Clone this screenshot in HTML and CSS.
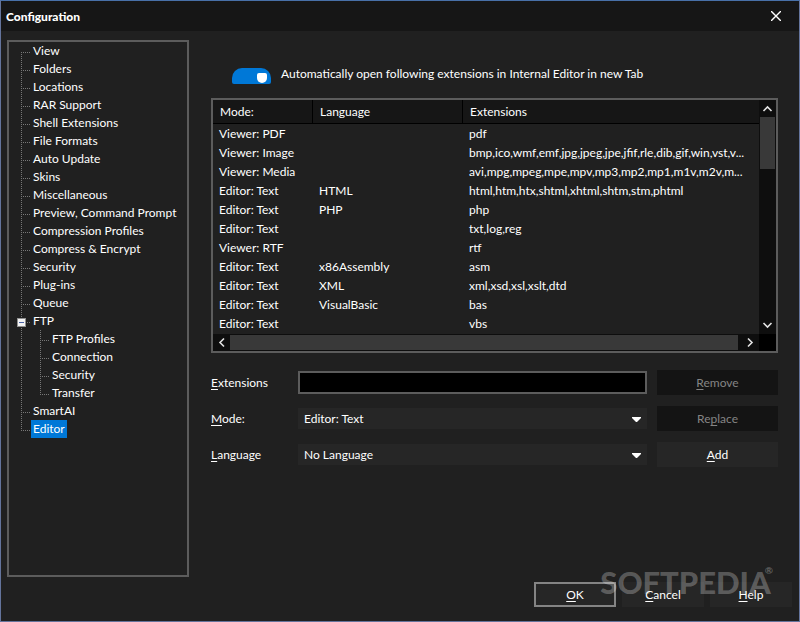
FILE: index.html
```
<!DOCTYPE html>
<html lang="en">
<head>
	<meta charset="UTF-8">
	<title>Configuration</title>
	<link rel="stylesheet" href="styles.css">
</head>
<body>
	<div class="window">
		<header class="titlebar">
			<h1>Configuration</h1>
			<button class="close" type="button" aria-label="Close">
				<svg width="10" height="10" viewBox="0 0 10 10"><path d="M0 0L10 10M10 0L0 10"/></svg>
			</button>
		</header>
		<div class="main">
			<nav class="tree">
				<ul>
					<li><a href="#view">View</a></li>
					<li><a href="#folders">Folders</a></li>
					<li><a href="#locations">Locations</a></li>
					<li><a href="#rar">RAR Support</a></li>
					<li><a href="#shell">Shell Extensions</a></li>
					<li><a href="#formats">File Formats</a></li>
					<li><a href="#update">Auto Update</a></li>
					<li><a href="#skins">Skins</a></li>
					<li><a href="#misc">Miscellaneous</a></li>
					<li><a href="#preview">Preview, Command Prompt</a></li>
					<li><a href="#profiles">Compression Profiles</a></li>
					<li><a href="#compress">Compress &amp; Encrypt</a></li>
					<li><a href="#security">Security</a></li>
					<li><a href="#plugins">Plug-ins</a></li>
					<li><a href="#queue">Queue</a></li>
					<li class="parent">
						<button class="toggle" type="button" aria-label="Collapse FTP" aria-expanded="true"></button>
						<a href="#ftp">FTP</a>
						<ul>
							<li><a href="#ftp-profiles">FTP Profiles</a></li>
							<li><a href="#ftp-connection">Connection</a></li>
							<li><a href="#ftp-security">Security</a></li>
							<li><a href="#ftp-transfer">Transfer</a></li>
						</ul>
					</li>
					<li><a href="#smartai">SmartAI</a></li>
					<li><a class="selected" href="#editor">Editor</a></li>
				</ul>
			</nav>
			<main class="pane" id="editor">
				<label class="auto-open">
					<input type="checkbox" class="switch" checked>
					<span>Automatically open following extensions in Internal Editor in new Tab</span>
				</label>

				<div class="list">
					<table>
						<colgroup>
							<col class="col-mode">
							<col class="col-lang">
							<col>
						</colgroup>
						<thead>
							<tr><th>Mode:</th><th>Language</th><th>Extensions</th></tr>
						</thead>
						<tbody>
							<tr><td>Viewer: PDF</td><td></td><td>pdf</td></tr>
							<tr><td>Viewer: Image</td><td></td><td>bmp,ico,wmf,emf,jpg,jpeg,jpe,jfif,rle,dib,gif,win,vst,v...</td></tr>
							<tr><td>Viewer: Media</td><td></td><td>avi,mpg,mpeg,mpe,mpv,mp3,mp2,mp1,m1v,m2v,m...</td></tr>
							<tr><td>Editor: Text</td><td>HTML</td><td>html,htm,htx,shtml,xhtml,shtm,stm,phtml</td></tr>
							<tr><td>Editor: Text</td><td>PHP</td><td>php</td></tr>
							<tr><td>Editor: Text</td><td></td><td>txt,log,reg</td></tr>
							<tr><td>Viewer: RTF</td><td></td><td>rtf</td></tr>
							<tr><td>Editor: Text</td><td>x86Assembly</td><td>asm</td></tr>
							<tr><td>Editor: Text</td><td>XML</td><td>xml,xsd,xsl,xslt,dtd</td></tr>
							<tr><td>Editor: Text</td><td>VisualBasic</td><td>bas</td></tr>
							<tr><td>Editor: Text</td><td></td><td>vbs</td></tr>
						</tbody>
					</table>
					<div class="vbar">
						<svg width="17" height="17" viewBox="0 0 17 17"><path d="M4.5 11L8.5 7L12.5 11"/></svg>
						<div class="track"><div class="thumb"></div></div>
						<svg width="17" height="17" viewBox="0 0 17 17"><path d="M4.5 6L8.5 10L12.5 6"/></svg>
					</div>
					<div class="hbar">
						<svg width="17" height="17" viewBox="0 0 17 17"><path d="M11 4.5L7 8.5L11 12.5"/></svg>
						<div class="thumb"></div>
						<svg width="17" height="17" viewBox="0 0 17 17"><path d="M6 4.5L10 8.5L6 12.5"/></svg>
					</div>
					<div class="corner"></div>
				</div>

				<form class="fields">
					<label for="ext"><u>E</u>xtensions</label>
					<input type="text" id="ext">
					<button type="button" disabled><span><u>R</u>emove</span></button>

					<label for="mode"><u>M</u>ode:</label>
					<div class="select">
						<select id="mode"><option>Editor: Text</option></select>
						<svg width="9" height="5" viewBox="0 0 9 5"><path d="M0 0H9V1L5 5H4L0 1Z"/></svg>
					</div>
					<button type="button" disabled><span>Re<u>p</u>lace</span></button>

					<label for="lang"><u>L</u>anguage</label>
					<div class="select">
						<select id="lang"><option>No Language</option></select>
						<svg width="9" height="5" viewBox="0 0 9 5"><path d="M0 0H9V1L5 5H4L0 1Z"/></svg>
					</div>
					<button type="button"><span><u>A</u>dd</span></button>
				</form>
			</main>
		</div>
		<footer class="actions">
			<button type="button" class="default"><span><u>O</u>K</span></button>
			<button type="button"><span><u>C</u>ancel</span></button>
			<button type="button"><span><u>H</u>elp</span></button>
			<div class="watermark">SOFTPEDIA<sup>®</sup></div>
		</footer>
	</div>
</body>
</html>
```

FILE: styles.css
```
* { margin: 0; padding: 0; box-sizing: border-box; }
body, button, input, select {
	font-family: Lato, "Open Sans", sans-serif;
	font-size: 12px;
	color: #fff;
}
body { background-color: #202020; }
button, input, select { border: none; border-radius: 0; }
a { color: inherit; text-decoration: none; }
u { text-underline-offset: 2px; }

.window {
	display: flex;
	flex-direction: column;
	min-height: 100vh;
	border: 1px solid #64749c;
	border-top-color: #4870a8;
}
.titlebar {
	display: flex;
	align-items: center;
	justify-content: space-between;
	height: 30px;
	padding: 0 18px 0 5px;
	background-color: #161616;
}
.titlebar h1 { font-size: 12px; font-weight: 900; }
.close { display: flex; background: none; }
.close path { stroke: #fff; stroke-width: 1.4; }

.main {
	flex: 1;
	display: flex;
	gap: 22px;
	padding: 9px 21px 5px 6px;
}

/* tree */
.tree {
	flex: 0 0 182px;
	min-width: 0;
	padding-left: 12px;
	border: 2px solid #5c5c5c;
}
.tree ul { list-style: none; }
.tree li {
	position: relative;
	padding-left: 10px;
	line-height: 18px;
	white-space: nowrap;
	background-image:
		repeating-linear-gradient(to bottom, #777 0 1px, transparent 1px 2px),
		repeating-linear-gradient(to right, #777 0 1px, transparent 1px 2px);
	background-size: 1px 100%, 10px 1px;
	background-position: 0 0, 0 10px;
	background-repeat: no-repeat;
}
.tree > ul > li:first-child { background-position: 0 10px, 0 10px; }
.tree li:last-child { background-size: 1px 10px, 10px 1px; }
.tree li li { margin-left: 9px; }
.tree a { display: block; width: fit-content; padding: 0 2px; }
.tree .selected { background-color: #0078d7; }
.toggle {
	position: absolute;
	left: -4px;
	top: 6px;
	width: 9px;
	height: 9px;
	border: 1px solid #919191;
	background: linear-gradient(#4b63a7, #4b63a7) center / 5px 1px no-repeat #f4f4f4;
}

/* right side */
.pane { flex: 1; min-width: 0; }
.auto-open {
	display: flex;
	align-items: center;
	gap: 10px;
	height: 35px;
	margin: 18px 0 5px 21px;
	line-height: 18px;
}
.auto-open span { padding-bottom: 4px; }
.switch {
	appearance: none;
	width: 39px;
	height: 16px;
	padding: 5px 4px 0 0;
	border-radius: 10px 10px 2px 2px;
	background-color: #0078d7;
}
.switch::before {
	content: "";
	display: block;
	width: 10px;
	height: 10px;
	margin-left: auto;
	border-radius: 2px 2px 5px 5px;
	background-color: #fff;
}

.list {
	display: grid;
	grid-template-columns: 1fr 17px;
	border: 2px solid #5c5c5c;
}
table {
	width: 100%;
	table-layout: fixed;
	border-collapse: separate;
	border-spacing: 0;
	margin-bottom: 1px;
}
.col-mode { width: 100px; }
.col-lang { width: 150px; }
th {
	height: 24px;
	padding: 0 7px;
	border-right: 1px solid #000;
	border-bottom: 1px solid #000;
	background-color: #161616;
	font-weight: normal;
	text-align: left;
}
th:last-child { border-right: none; }
td {
	height: 19px;
	padding: 0 0 0 6px;
	line-height: 18px;
	white-space: nowrap;
	overflow: hidden;
	text-overflow: ellipsis;
}
.vbar, .hbar { display: flex; background-color: #0e0e0e; }
.vbar { flex-direction: column; }
.track { flex: 1; padding: 0 1px; }
.track .thumb { height: 26%; }
.thumb { background-color: #393939; }
.hbar { height: 17px; }
.hbar .thumb { flex: 1; margin: 1px 4px 1px 0; }
.hbar svg, .vbar svg { flex: none; }
.list path { fill: none; stroke: #e4e4e4; stroke-width: 1.6; }
.corner { background-color: #000; }

.fields {
	display: grid;
	grid-template-columns: 77px 1fr 121px;
	grid-auto-rows: 25px;
	gap: 11px 10px;
	align-items: center;
	margin-top: 17px;
}
.fields input {
	width: 100%;
	height: 23px;
	padding: 0 4px;
	border: 2px solid #5c5c5c;
	background-color: #000;
}
.select { position: relative; }
.select select {
	appearance: none;
	display: block;
	width: 100%;
	height: 21px;
	padding: 0 20px 0 6px;
	background-color: #262626;
}
.select svg {
	position: absolute;
	right: 6px;
	top: 9px;
	fill: #fff;
	pointer-events: none;
}
.fields button, .actions button {
	height: 25px;
	background-color: #262626;
}
.fields button:disabled { background-color: #141414; color: #848484; }

.actions {
	position: relative;
	display: flex;
	justify-content: flex-end;
	gap: 6px;
	padding: 0 7px 14px;
}
.actions button { width: 82px; }
.actions .default { border: 2px solid #848484; }
.watermark {
	position: absolute;
	right: 26px;
	bottom: 19px;
	font-family: Lato, sans-serif;
	font-size: 31px;
	font-weight: 900;
	line-height: 40px;
	color: rgba(255, 255, 255, 0.27);
	pointer-events: none;
}
.watermark sup { margin-left: -6px; font-size: 10px; line-height: 16px; vertical-align: top; }
```
